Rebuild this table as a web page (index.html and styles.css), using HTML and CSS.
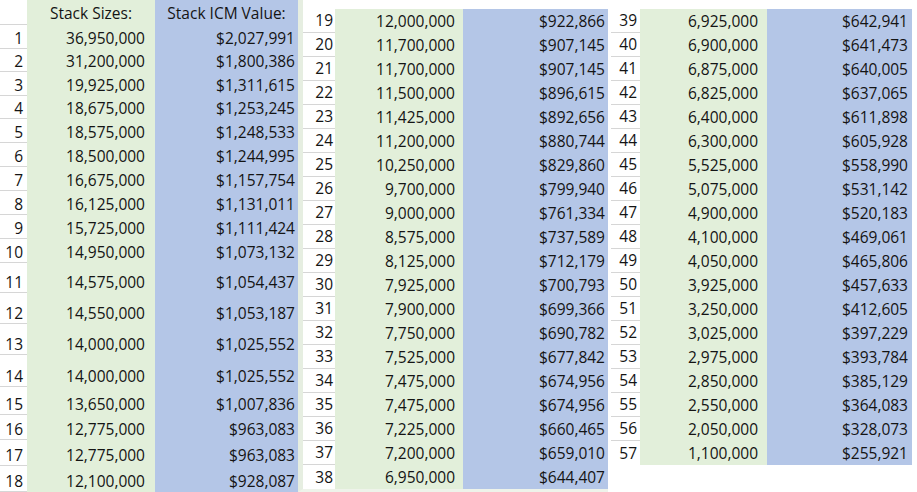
FILE: index.html
```html
<!DOCTYPE html>
<html>
<head>
<meta charset="utf-8">
<link rel="stylesheet" href="styles.css">
</head>
<body>
<div class="sheet">
  <div class="panel p1">
    <div class="c n"></div><div class="c g h">Stack Sizes:</div><div class="c b h">Stack ICM Value:</div>
    <div class="c n">1</div><div class="c g">36,950,000</div><div class="c b">$2,027,991</div>
    <div class="c n">2</div><div class="c g">31,200,000</div><div class="c b">$1,800,386</div>
    <div class="c n">3</div><div class="c g">19,925,000</div><div class="c b">$1,311,615</div>
    <div class="c n">4</div><div class="c g">18,675,000</div><div class="c b">$1,253,245</div>
    <div class="c n">5</div><div class="c g">18,575,000</div><div class="c b">$1,248,533</div>
    <div class="c n">6</div><div class="c g">18,500,000</div><div class="c b">$1,244,995</div>
    <div class="c n">7</div><div class="c g">16,675,000</div><div class="c b">$1,157,754</div>
    <div class="c n">8</div><div class="c g">16,125,000</div><div class="c b">$1,131,011</div>
    <div class="c n">9</div><div class="c g">15,725,000</div><div class="c b">$1,111,424</div>
    <div class="c n">10</div><div class="c g">14,950,000</div><div class="c b">$1,073,132</div>
    <div class="c n">11</div><div class="c g">14,575,000</div><div class="c b">$1,054,437</div>
    <div class="c n">12</div><div class="c g">14,550,000</div><div class="c b">$1,053,187</div>
    <div class="c n">13</div><div class="c g">14,000,000</div><div class="c b">$1,025,552</div>
    <div class="c n">14</div><div class="c g">14,000,000</div><div class="c b">$1,025,552</div>
    <div class="c n">15</div><div class="c g">13,650,000</div><div class="c b">$1,007,836</div>
    <div class="c n">16</div><div class="c g">12,775,000</div><div class="c b">$963,083</div>
    <div class="c n">17</div><div class="c g">12,775,000</div><div class="c b">$963,083</div>
    <div class="c n">18</div><div class="c g">12,100,000</div><div class="c b">$928,087</div>
  </div>
  <div class="panel p2">
    <div class="c n">19</div><div class="c g">12,000,000</div><div class="c b">$922,866</div>
    <div class="c n">20</div><div class="c g">11,700,000</div><div class="c b">$907,145</div>
    <div class="c n">21</div><div class="c g">11,700,000</div><div class="c b">$907,145</div>
    <div class="c n">22</div><div class="c g">11,500,000</div><div class="c b">$896,615</div>
    <div class="c n">23</div><div class="c g">11,425,000</div><div class="c b">$892,656</div>
    <div class="c n">24</div><div class="c g">11,200,000</div><div class="c b">$880,744</div>
    <div class="c n">25</div><div class="c g">10,250,000</div><div class="c b">$829,860</div>
    <div class="c n">26</div><div class="c g">9,700,000</div><div class="c b">$799,940</div>
    <div class="c n">27</div><div class="c g">9,000,000</div><div class="c b">$761,334</div>
    <div class="c n">28</div><div class="c g">8,575,000</div><div class="c b">$737,589</div>
    <div class="c n">29</div><div class="c g">8,125,000</div><div class="c b">$712,179</div>
    <div class="c n">30</div><div class="c g">7,925,000</div><div class="c b">$700,793</div>
    <div class="c n">31</div><div class="c g">7,900,000</div><div class="c b">$699,366</div>
    <div class="c n">32</div><div class="c g">7,750,000</div><div class="c b">$690,782</div>
    <div class="c n">33</div><div class="c g">7,525,000</div><div class="c b">$677,842</div>
    <div class="c n">34</div><div class="c g">7,475,000</div><div class="c b">$674,956</div>
    <div class="c n">35</div><div class="c g">7,475,000</div><div class="c b">$674,956</div>
    <div class="c n">36</div><div class="c g">7,225,000</div><div class="c b">$660,465</div>
    <div class="c n">37</div><div class="c g">7,200,000</div><div class="c b">$659,010</div>
    <div class="c n last">38</div><div class="c g">6,950,000</div><div class="c b">$644,407</div>
  </div>
  <div class="panel p3">
    <div class="c n">39</div><div class="c g">6,925,000</div><div class="c b">$642,941</div>
    <div class="c n">40</div><div class="c g">6,900,000</div><div class="c b">$641,473</div>
    <div class="c n">41</div><div class="c g">6,875,000</div><div class="c b">$640,005</div>
    <div class="c n">42</div><div class="c g">6,825,000</div><div class="c b">$637,065</div>
    <div class="c n">43</div><div class="c g">6,400,000</div><div class="c b">$611,898</div>
    <div class="c n">44</div><div class="c g">6,300,000</div><div class="c b">$605,928</div>
    <div class="c n">45</div><div class="c g">5,525,000</div><div class="c b">$558,990</div>
    <div class="c n">46</div><div class="c g">5,075,000</div><div class="c b">$531,142</div>
    <div class="c n">47</div><div class="c g">4,900,000</div><div class="c b">$520,183</div>
    <div class="c n">48</div><div class="c g">4,100,000</div><div class="c b">$469,061</div>
    <div class="c n">49</div><div class="c g">4,050,000</div><div class="c b">$465,806</div>
    <div class="c n">50</div><div class="c g">3,925,000</div><div class="c b">$457,633</div>
    <div class="c n">51</div><div class="c g">3,250,000</div><div class="c b">$412,605</div>
    <div class="c n">52</div><div class="c g">3,025,000</div><div class="c b">$397,229</div>
    <div class="c n">53</div><div class="c g">2,975,000</div><div class="c b">$393,784</div>
    <div class="c n">54</div><div class="c g">2,850,000</div><div class="c b">$385,129</div>
    <div class="c n">55</div><div class="c g">2,550,000</div><div class="c b">$364,083</div>
    <div class="c n">56</div><div class="c g">2,050,000</div><div class="c b">$328,073</div>
    <div class="c n last">57</div><div class="c g">1,100,000</div><div class="c b">$255,921</div>
  </div>
</div>
</body>
</html>
```
FILE: styles.css
```css
html, body {
  margin: 0;
  padding: 0;
  background: #ffffff;
}
body {
  font-family: "Open Sans", "Liberation Sans", sans-serif;
  font-size: 15.5px;
  color: #141414;
}
.sheet {
  display: flex;
  align-items: flex-start;
  width: 917px;
  height: 492px;
  overflow: hidden;
}
.panel {
  display: grid;
  box-sizing: border-box;
}
.p1 {
  grid-template-columns: 27px 128px 143px;
  grid-template-rows: 25px 24px 23px 24px 23px 24px 24px 24px 24px 24px 24px 30px 31px 31px 32px 28px 25px 26px 26px;
}
.p2 {
  grid-template-columns: 32px 128px 145px;
  grid-auto-rows: 24px;
  padding-top: 9px;
  height: 492px;
  border-left: 5px solid #e6eee1;
  border-bottom: 3px solid #eef3ea;
  align-content: start;
}
.p3 {
  grid-template-columns: 29px 127px 145px;
  grid-auto-rows: 24px;
  padding-top: 9px;
  margin-left: 3px;
}
.c {
  display: flex;
  align-items: flex-end;
  justify-content: flex-end;
  box-sizing: border-box;
  line-height: 18px;
  white-space: nowrap;
  padding-bottom: 2px;
}
.n {
  background: #ffffff;
  border-bottom: 1px solid #d6d6d6;
}
.n.last {
  border-bottom: none;
}
.g {
  background: #e2efda;
}
.b {
  background: #b4c6e7;
}
.h {
  justify-content: center;
  padding-right: 0;
  padding-bottom: 3px;
}
.p1 .n { padding-right: 4px; padding-bottom: 1px; }
.p1 .g { padding-right: 10px; padding-bottom: 2px; }
.p1 .b { padding-right: 3px; padding-bottom: 2px; }
.p1 .h { padding-right: 0; padding-bottom: 3px; }
.p2 .n { padding-right: 2px; padding-bottom: 3px; }
.p2 .g { padding-right: 8px; padding-bottom: 3px; }
.p2 .b { padding-right: 3px; padding-bottom: 3px; }
.p3 .n { padding-right: 3px; padding-bottom: 3px; }
.p3 .g { padding-right: 9px; padding-bottom: 3px; }
.p3 .b { padding-right: 4px; padding-bottom: 3px; }
```
